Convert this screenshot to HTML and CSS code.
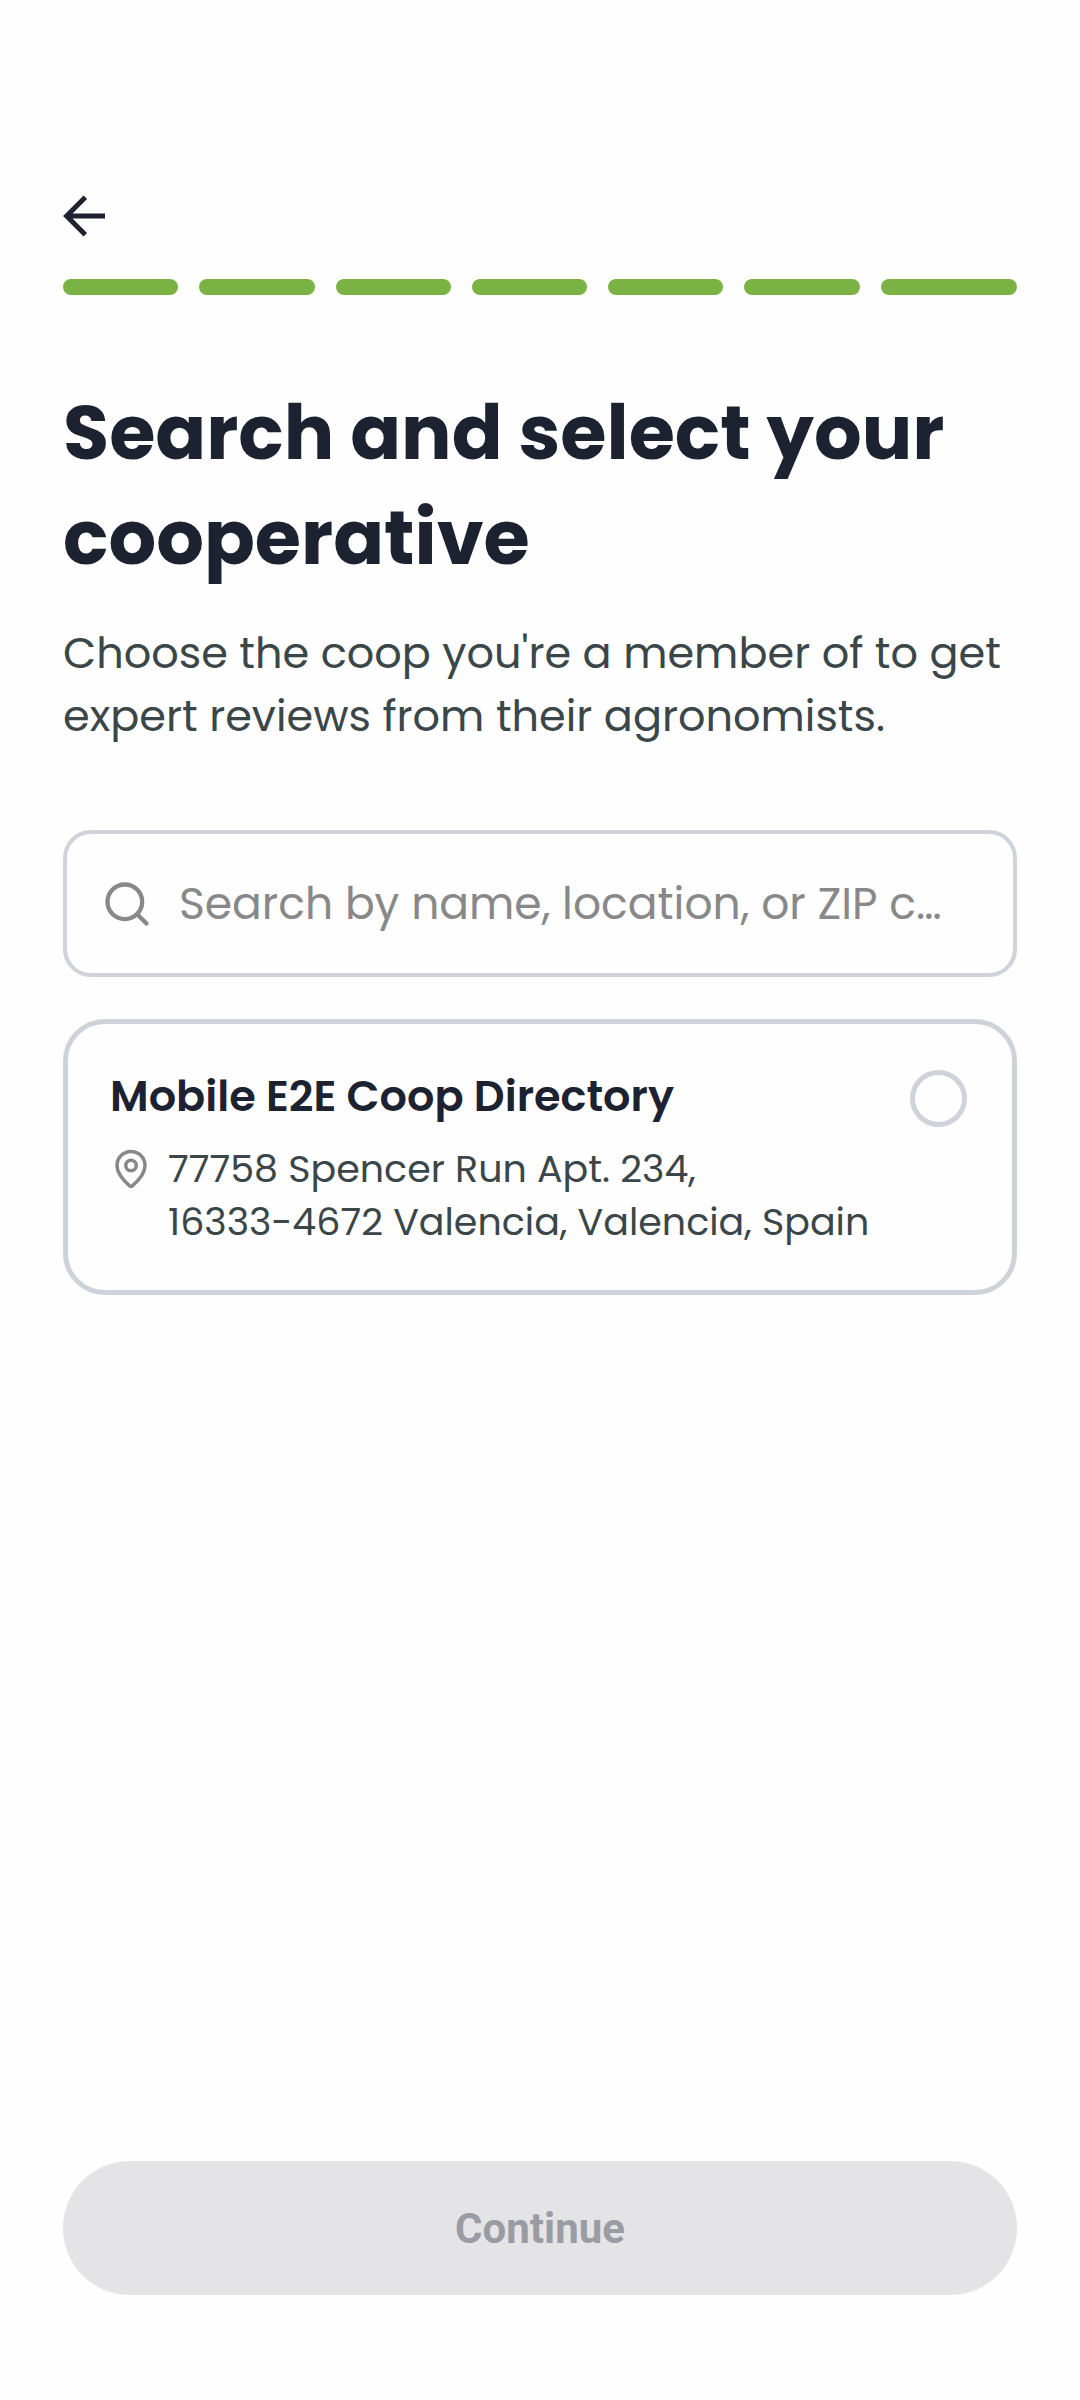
FILE: index.html
```html
<!DOCTYPE html>
<html lang="en">
<head>
  <meta charset="utf-8">
  <meta name="viewport" content="width=device-width, initial-scale=1">
  <title>Select your cooperative</title>
  <link rel="stylesheet" href="styles.css">
</head>
<body>
  <main class="screen">
    <header class="top">
      <button class="back" type="button" aria-label="Back">
        <svg class="back-icon" viewBox="0 0 42 42" aria-hidden="true"><path d="M42 21H5M22.3 2.3 3.6 21l18.7 18.7"/></svg>
      </button>
      <ol class="steps" aria-label="Progress">
        <li class="step"></li>
        <li class="step"></li>
        <li class="step"></li>
        <li class="step"></li>
        <li class="step"></li>
        <li class="step"></li>
        <li class="step"></li>
      </ol>
    </header>

    <h1 class="title">Search and select your cooperative</h1>
    <p class="lead">Choose the coop you're a member of to get expert reviews from their agronomists.</p>

    <label class="search">
      <svg class="search-icon" viewBox="0 0 24 24" aria-hidden="true"><circle cx="11" cy="11" r="8"/><path d="m21 21-4.3-4.3"/></svg>
      <input class="search-input" type="text" aria-label="Search cooperatives" placeholder="Search by name, location, or ZIP c…">
    </label>

    <label class="coop">
      <span class="coop-body">
        <span class="coop-name">Mobile E2E Coop Directory</span>
        <span class="coop-place">
          <svg class="pin-icon" viewBox="0 0 24 24" aria-hidden="true"><path d="M20 10c0 4.99-5.54 10.19-7.4 11.8a1 1 0 0 1-1.2 0C9.54 20.19 4 14.99 4 10a8 8 0 0 1 16 0"/><circle cx="12" cy="10" r="3"/></svg>
          <span class="coop-address">77758 Spencer Run Apt. 234,<br>16333-4672 Valencia, Valencia, Spain</span>
        </span>
      </span>
      <input class="coop-radio" type="radio" name="coop">
    </label>

    <button class="continue" type="button" disabled>Continue</button>
  </main>
</body>
</html>
```

FILE: styles.css
```css
* {
  box-sizing: border-box;
}

body {
  margin: 0;
  background: #fefefe;
  color: #1d2230;
  font-family: "Poppins", "Inter", sans-serif;
}

.screen {
  display: flex;
  flex-direction: column;
  min-height: 100vh;
  padding: 195px 63px 105px;
}

.top {
  display: flex;
  flex-direction: column;
  gap: 42px;
}

.back {
  display: flex;
  width: 42px;
  padding: 0;
  border: 0;
  background: none;
  color: inherit;
}

.back-icon {
  width: 42px;
  height: 42px;
  fill: none;
  stroke: currentColor;
  stroke-width: 5;
}

.steps {
  display: grid;
  grid-template-columns: repeat(7, 1fr);
  margin: 0;
  padding: 0;
  list-style: none;
}

.step {
  height: 16px;
  margin-right: 21px;
  border-radius: 8px;
  background: #7ab344;
}

.step:last-child {
  margin-right: 0;
}

.title {
  margin: 85px 0 0;
  font-size: 75px;
  font-weight: 700;
  line-height: 105px;
}

.lead {
  margin: 32px 0 0;
  color: #3b4648;
  font-size: 43px;
  line-height: 63px;
}

.search {
  display: flex;
  align-items: center;
  gap: 26px;
  margin-top: 82px;
  padding: 38px 34px;
  border: 4px solid #ced3da;
  border-radius: 28px;
}

.search-icon {
  flex: none;
  width: 52px;
  height: 52px;
  fill: none;
  stroke: #888;
  stroke-width: 2;
  stroke-linecap: round;
}

.search-input {
  flex: 1;
  min-width: 0;
  height: 63px;
  padding: 0;
  border: 0;
  outline: 0;
  background: none;
  color: inherit;
  font: inherit;
  font-size: 44px;
  text-overflow: ellipsis;
}

.search-input::placeholder {
  color: #888;
  opacity: 1;
}

.coop {
  display: flex;
  align-items: flex-start;
  margin-top: 42px;
  padding: 42px 45px 42px 42px;
  border: 5px solid #ced3da;
  border-radius: 42px;
}

.coop-body {
  display: flex;
  flex: 1;
  flex-direction: column;
  gap: 16px;
  min-width: 0;
}

.coop-name {
  font-size: 43px;
  font-weight: 600;
  line-height: 60px;
}

.coop-place {
  display: flex;
  gap: 16px;
}

.pin-icon {
  flex: none;
  width: 42px;
  height: 42px;
  margin-top: 6px;
  fill: none;
  stroke: #888;
  stroke-width: 2;
}

.coop-address {
  color: #3b4648;
  font-size: 38px;
  line-height: 53px;
}

.coop-radio {
  flex: none;
  width: 57px;
  height: 57px;
  margin: 4px 0 0;
  border: 5px solid #ced3da;
  border-radius: 50%;
  appearance: none;
}

.coop-radio:checked {
  border-color: #7ab344;
  background: #7ab344;
}

.continue {
  height: 134px;
  margin-top: auto;
  border: 0;
  border-radius: 67px;
  background: #e4e4e6;
  color: #9a9ca4;
  font: 700 42px Roboto, sans-serif;
}
```
